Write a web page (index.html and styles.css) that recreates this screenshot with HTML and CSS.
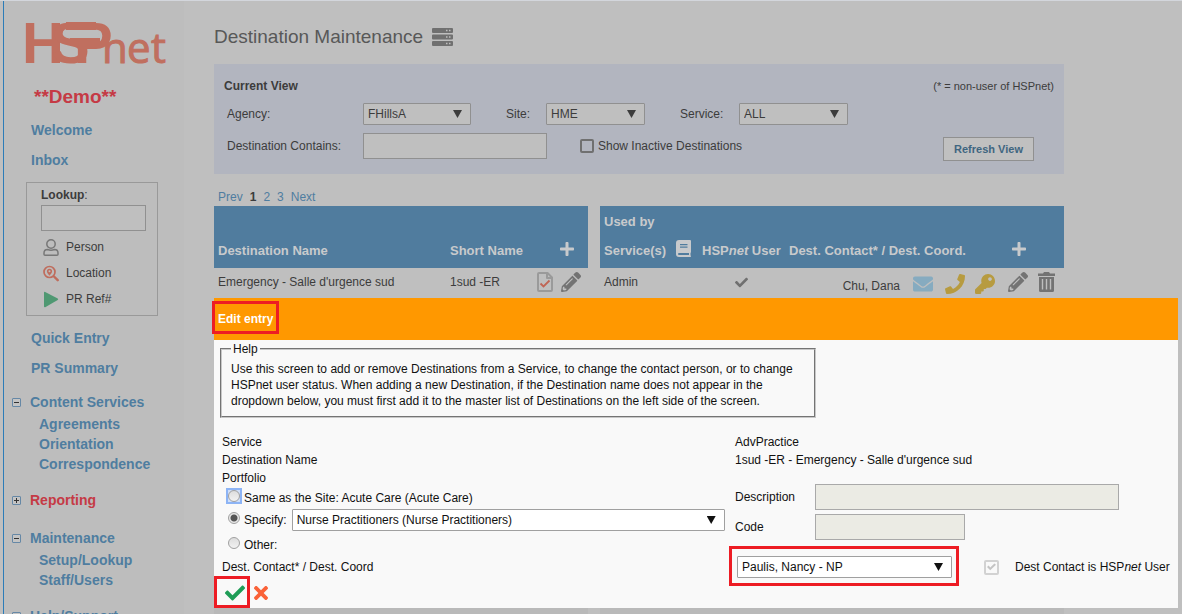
FILE: index.html
```html
<!DOCTYPE html>
<html lang="en">
<head>
<meta charset="utf-8">
<title>HSPnet - Destination Maintenance</title>
<link rel="stylesheet" href="styles.css">
</head>
<body>
<svg class="sprite" aria-hidden="true">
  <symbol id="i-check" viewBox="0 0 512 512"><path d="M173.898 439.404l-166.4-166.4c-9.997-9.997-9.997-26.206 0-36.204l36.203-36.204c9.997-9.998 26.207-9.998 36.204 0L192 312.69 432.095 72.596c9.997-9.997 26.207-9.997 36.204 0l36.203 36.204c9.997 9.997 9.997 26.206 0 36.204l-294.4 294.401c-9.998 9.997-26.207 9.997-36.204-.001z"/></symbol>
  <symbol id="i-times" viewBox="0 80 352 352"><path d="M242.72 256l100.07-100.07c12.28-12.28 12.28-32.19 0-44.48l-22.24-22.24c-12.28-12.28-32.19-12.28-44.48 0L176 189.28 75.93 89.21c-12.28-12.28-32.19-12.28-44.48 0L9.21 111.45c-12.28 12.28-12.28 32.19 0 44.48L109.28 256 9.21 356.07c-12.28 12.28-12.28 32.19 0 44.48l22.24 22.24c12.28 12.28 32.2 12.28 44.48 0L176 322.72l100.07 100.07c12.28 12.28 32.2 12.28 44.48 0l22.24-22.24c12.28-12.28 12.28-32.19 0-44.48L242.72 256z"/></symbol>
  <symbol id="i-plus" viewBox="0 32 448 448"><path d="M416 208H272V64c0-17.67-14.33-32-32-32h-32c-17.67 0-32 14.33-32 32v144H32c-17.67 0-32 14.33-32 32v32c0 17.67 14.33 32 32 32h144v144c0 17.67 14.33 32 32 32h32c17.67 0 32-14.33 32-32V304h144c17.67 0 32-14.33 32-32v-32c0-17.67-14.33-32-32-32z"/></symbol>
  <symbol id="i-envelope" viewBox="0 0 512 512"><path d="M502.3 190.8c3.9-3.1 9.7-.2 9.7 4.7V400c0 26.5-21.5 48-48 48H48c-26.5 0-48-21.5-48-48V195.6c0-5 5.7-7.8 9.7-4.7 22.4 17.4 52.1 39.5 154.1 113.6 21.1 15.4 56.7 47.8 92.2 47.6 35.7.3 72-32.8 92.3-47.6 102-74.1 131.6-96.3 154-113.7zM256 320c23.2.4 56.6-29.2 73.4-41.4 132.7-96.3 142.8-104.7 173.4-128.7 5.8-4.5 9.2-11.5 9.2-18.9v-19c0-26.5-21.5-48-48-48H48c-26.5 0-48 21.5-48 48v19c0 7.4 3.4 14.3 9.2 18.9 30.6 23.9 40.7 32.4 173.4 128.7 16.8 12.2 50.2 41.8 73.4 41.4z"/></symbol>
  <symbol id="i-phone" viewBox="0 0 512 512"><path d="M493.4 24.6l-104-24c-11.3-2.6-22.9 3.3-27.5 13.9l-48 112c-4.2 9.8-1.4 21.3 6.9 28l60.6 49.6c-36 76.7-98.9 140.5-177.2 177.2l-49.6-60.6c-6.8-8.3-18.2-11.1-28-6.9l-112 48C3.9 366.5-2 378.1.6 389.4l24 104C27.1 504.2 36.7 512 48 512c256.1 0 464-207.5 464-464 0-11.2-7.7-20.9-18.6-23.4z"/></symbol>
  <symbol id="i-key" viewBox="0 0 512 512"><path d="M512 176.001C512 273.203 433.202 352 336 352c-11.22 0-22.19-1.062-32.827-3.069l-24.012 27.014A23.999 23.999 0 0 1 261.223 384H224v40c0 13.255-10.745 24-24 24h-40v40c0 13.255-10.745 24-24 24H24c-13.255 0-24-10.745-24-24v-78.059c0-6.365 2.529-12.47 7.029-16.971l161.802-161.802C163.108 213.814 160 195.271 160 176 160 78.798 238.797.001 335.999 0 433.488-.001 512 78.511 512 176.001zM336 128c0 26.51 21.49 48 48 48s48-21.49 48-48-21.49-48-48-48-48 21.49-48 48z"/></symbol>
  <symbol id="i-pencil" viewBox="0 0 512 512"><path d="M497.9 142.1l-46.1 46.1c-4.7 4.7-12.3 4.7-17 0l-111-111c-4.7-4.7-4.7-12.3 0-17l46.1-46.1c18.7-18.7 49.1-18.7 67.9 0l60.1 60.1c18.8 18.7 18.8 49.1 0 67.9zM284.2 99.8L21.6 362.4.4 483.9c-2.9 16.4 11.4 30.6 27.8 27.8l121.5-21.3 262.6-262.6c4.7-4.7 4.7-12.3 0-17l-111-111c-4.8-4.7-12.4-4.7-17.1 0zM124.1 339.9c-5.5-5.5-5.5-14.3 0-19.8l154-154c5.5-5.5 14.3-5.5 19.8 0s5.5 14.3 0 19.8l-154 154c-5.5 5.5-14.3 5.5-19.8 0zM88 424h48v36.3l-64.5 11.3-31.1-31.1L51.7 376H88v48z"/></symbol>
  <symbol id="i-trash" viewBox="0 0 17 20"><path fill-rule="evenodd" d="M0 1.500h5L6 0h5l1 1.500h5V4H0zM1 5h15v13.500q0 1.500-1.500 1.500h-12Q1 20 1 18.500zM3.800 7v10.500h1.400V7zM7.800 7v10.500h1.400V7zM11.800 7v10.500h1.400V7z"/></symbol>
  <symbol id="i-book" viewBox="0 0 15 17"><path fill-rule="evenodd" d="M3 0h11q1 0 1 1v11q0 .7-.5 1v2.500q.5.2.5.700t-.7.800H3q-3 0-3-3V3Q0 0 3 0zM4 4v1.200h7.500V4zM4 6.500v1.200h7.500V6.500zM3 13q-1 0-1 1t1 1h10v-2z"/></symbol>
  <symbol id="i-server" viewBox="0 0 21 18"><path fill-rule="evenodd" d="M1 0h19q1 0 1 1v3q0 1-1 1H1Q0 5 0 4V1q0-1 1-1zM14 1.800v1.400h1.500V1.800zM17 1.800v1.400h1.500V1.800zM1 6.500h19q1 0 1 1v3q0 1-1 1H1q-1 0-1-1v-3q0-1 1-1zM14 8.300v1.400h1.500V8.300zM17 8.300v1.400h1.500V8.300zM1 13h19q1 0 1 1v3q0 1-1 1H1q-1 0-1-1v-3q0-1 1-1zM14 14.800v1.400h1.500v-1.400zM17 14.800v1.400h1.500v-1.400z"/></symbol>
  <symbol id="i-filecheck" viewBox="0 0 16 20"><path fill="none" stroke="#9a9a9a" stroke-width="2" stroke-linejoin="round" d="M2 1h8.500L15 5.500V18q0 1-1 1H2q-1 0-1-1V2q0-1 1-1zM10 1v5h5"/><path fill="none" stroke="#c06555" stroke-width="1.800" d="M3.500 11.500l3 3 6-6"/></symbol>
  <symbol id="i-person" viewBox="0 0 16 17"><g fill="none" stroke="#777" stroke-width="1.500"><circle cx="8" cy="5" r="4.200"/><path d="M4.500 10.500q3.500 1.500 7 0 3.500 0 3.500 3.500v1.200q0 1-1 1H2q-1 0-1-1V14q0-3.500 3.500-3.500z"/></g></symbol>
  <symbol id="i-location" viewBox="0 0 16 16"><g fill="none" stroke="#bf6d5d"><circle cx="6.500" cy="6.500" r="5.500" stroke-width="1.700"/><path stroke-width="2.400" stroke-linecap="round" d="M11 11l3.700 3.700"/></g><path fill="#bf6d5d" fill-rule="evenodd" d="M6.500 3.200a2.600 2.600 0 0 1 2.600 2.600C9.100 7.500 6.500 10.200 6.500 10.200S3.900 7.500 3.900 5.800a2.600 2.600 0 0 1 2.600-2.600zm0 1.600a1 1 0 1 0 0 2 1 1 0 0 0 0-2z"/></symbol>
  <symbol id="i-play" viewBox="0 0 16 16"><path d="M1 1q0-1 1.200-.5l12.500 6.500q1 .8 0 1.600L2.200 15.800Q1 16 1 15z"/></symbol>
</svg>

<div class="app">
  <aside class="sidebar">
    <svg class="logo" viewBox="0 0 140 44" role="img" aria-label="HSPnet">
      <text class="logo-bold" x="-4 25 48" y="41">HSP</text>
      <path class="logo-fill" d="M40 0h30v8H40zM44 16h30v8H44z"/>
      <rect class="logo-gap" x="39" y="8" width="34" height="8" rx="4"/>
      <text class="logo-light" x="76 101 125" y="41">net</text>
    </svg>
    <p class="demo">**Demo**</p>
    <nav>
      <ul class="links">
        <li><a href="#">Welcome</a></li>
        <li><a href="#">Inbox</a></li>
      </ul>
      <form class="lookup">
        <label for="lookup"><b>Lookup</b>:</label>
        <input id="lookup" class="text" type="text">
        <button type="button"><svg><use href="#i-person"/></svg>Person</button>
        <button type="button"><svg><use href="#i-location"/></svg>Location</button>
        <button type="button"><svg class="green"><use href="#i-play"/></svg>PR Ref#</button>
      </form>
      <ul class="links">
        <li><a href="#">Quick Entry</a></li>
        <li><a href="#">PR Summary</a></li>
      </ul>
      <ul class="groups">
        <li><button type="button" class="toggle open" aria-label="Collapse"></button><a href="#">Content Services</a>
          <ul><li><a href="#">Agreements</a></li><li><a href="#">Orientation</a></li><li><a href="#">Correspondence</a></li></ul></li>
        <li><button type="button" class="toggle" aria-label="Expand"></button><a href="#" class="current">Reporting</a></li>
        <li><button type="button" class="toggle open" aria-label="Collapse"></button><a href="#">Maintenance</a>
          <ul><li><a href="#">Setup/Lookup</a></li><li><a href="#">Staff/Users</a></li></ul></li>
        <li><button type="button" class="toggle open" aria-label="Collapse"></button><a href="#">Help/Support</a></li>
      </ul>
    </nav>
  </aside>

  <main class="main">
    <h1>Destination Maintenance <svg><use href="#i-server"/></svg></h1>
    <form class="filter">
      <div class="filter-head"><h2>Current View</h2><small>(* = non-user of HSPnet)</small></div>
      <div class="filter-row selects">
        <div class="field"><label class="wide" for="agency">Agency:</label><span class="select w-agency"><select id="agency"><option>FHillsA</option></select></span></div>
        <div class="field"><label class="short" for="site">Site:</label><span class="select w-site"><select id="site"><option>HME</option></select></span></div>
        <div class="field"><label class="mid" for="service">Service:</label><span class="select w-service"><select id="service"><option>ALL</option></select></span></div>
      </div>
      <div class="filter-row">
        <div class="field"><label class="wide" for="contains">Destination Contains:</label><input id="contains" class="text w-contains" type="text"></div>
        <label class="inactive"><input type="checkbox">Show Inactive Destinations</label>
        <button type="button" class="refresh">Refresh View</button>
      </div>
    </form>
    <div class="pager"><a href="#">Prev</a><b>1</b><a href="#">2</a><a href="#">3</a><a href="#">Next</a></div>
    <div class="tables">
      <table>
        <colgroup><col><col class="c-short"><col class="c-tools"></colgroup>
        <thead><tr><th>Destination Name</th><th>Short Name</th><th class="add add-left"><svg class="plus"><use href="#i-plus"/></svg></th></tr></thead>
        <tbody>
          <tr><td>Emergency - Salle d'urgence sud</td><td>1sud -ER</td><td><div class="tools"><svg class="file"><use href="#i-filecheck"/></svg><svg><use href="#i-pencil"/></svg></div></td></tr>
          <tr class="rest"><td colspan="3"></td></tr>
        </tbody>
      </table>
      <table>
        <colgroup><col class="c-services"><col class="c-user"><col><col class="c-edit"></colgroup>
        <thead><tr><th>Used by<br><span class="with-icon">Service(s)<svg class="book"><use href="#i-book"/></svg></span></th><th>HSP<i>net</i> User</th><th>Dest. Contact* / Dest. Coord.</th><th class="add"><svg class="plus"><use href="#i-plus"/></svg></th></tr></thead>
        <tbody>
          <tr><td>Admin</td><td class="tick"><svg><use href="#i-check"/></svg></td><td><div class="contact"><span>Chu, Dana</span><svg class="mail"><use href="#i-envelope"/></svg><svg class="gold"><use href="#i-phone"/></svg><svg class="gold"><use href="#i-key"/></svg></div></td><td><div class="tools"><svg><use href="#i-pencil"/></svg><svg class="trash"><use href="#i-trash"/></svg></div></td></tr>
          <tr class="rest"><td colspan="4"></td></tr>
        </tbody>
      </table>
    </div>
  </main>

  <section class="dialog" role="dialog" aria-labelledby="dialog-title">
    <header><h2 id="dialog-title"><span class="marked mark-title">Edit entry</span></h2></header>
    <form class="entry">
      <fieldset class="help">
        <legend>Help</legend>
        Use this screen to add or remove Destinations from a Service, to change the contact person, or to change HSPnet user status. When adding a new Destination, if the Destination name does not appear in the dropdown below, you must first add it to the master list of Destinations on the left side of the screen.
      </fieldset>
      <div class="grid">
        <div>Service</div><div>AdvPractice</div>
        <div>Destination Name</div><div>1sud -ER - Emergency - Salle d'urgence sud</div>
        <div class="portfolio">
          <div>Portfolio</div>
          <div class="choice"><span class="focus-ring"><input type="radio" name="portfolio" id="p1"></span><label for="p1">Same as the Site: Acute Care (Acute Care)</label></div>
          <div class="choice"><input type="radio" name="portfolio" id="p2" checked><label for="p2">Specify:</label><span class="select w-specify"><select aria-label="Portfolio"><option>Nurse Practitioners (Nurse Practitioners)</option></select></span></div>
          <div class="choice other"><input type="radio" name="portfolio" id="p3"><label for="p3">Other:</label></div>
        </div>
        <div class="details">
          <label for="desc">Description</label><input id="desc" class="text" type="text" disabled>
          <label for="code">Code</label><input id="code" class="text code" type="text" disabled>
        </div>
        <label class="contact-label" for="coord">Dest. Contact* / Dest. Coord</label>
        <div class="contact-row">
          <span class="marked mark-contact"><span class="select w-coord"><select id="coord"><option>Paulis, Nancy - NP</option></select></span></span>
          <label class="is-user"><input type="checkbox" checked disabled><span>Dest Contact is HSP<i>net</i> User</span></label>
        </div>
      </div>
      <div class="actions">
        <button type="button" class="save marked mark-save" aria-label="Save"><svg><use href="#i-check"/></svg></button>
        <button type="button" class="cancel" aria-label="Cancel"><svg><use href="#i-times"/></svg></button>
      </div>
    </form>
  </section>
</div>
</body>
</html>
```

FILE: styles.css
```css
* { box-sizing: border-box; }

body {
  margin: 0;
  background: #bfbfbf;
  color: #3c3c3c;
  font: 12px/20px "Liberation Sans", Arial, sans-serif;
}

h1, h2, p, ul { margin: 0; padding: 0; }
ul { list-style: none; }
a { color: #4f7da0; text-decoration: none; }
button, input, select { font: inherit; color: inherit; margin: 0; }
button { padding: 0; border: 0; background: none; }
svg { display: block; fill: currentColor; }
.sprite { position: absolute; width: 0; height: 0; }

.app {
  position: relative;
  display: flex;
  height: 100vh;
  overflow: hidden;
  border-top: 1px solid #d3d6dc;
}

/* Sidebar */
.sidebar {
  flex: none;
  width: 181px;
  margin-left: 3px;
  padding: 21px 0 0 22px;
  border-left: 1px solid #2c7cb8;
  background: #bdbdbd;
}
.logo { width: 140px; height: 44px; overflow: visible; color: #c06f5f; }
.logo-bold { font: bold 58px "Liberation Sans", Arial, sans-serif; }
.logo-light {
  font: 42px "Open Sans", "Noto Sans", sans-serif;
  stroke: currentColor;
  stroke-width: 1px;
}
.logo-gap { fill: #bdbdbd; }
.demo {
  padding: 19px 0 11px 8px;
  color: #c53a45;
  font-size: 19px;
  font-weight: bold;
  line-height: 24px;
}
.links {
  display: grid;
  gap: 10px;
  padding-left: 5px;
  font-size: 14px;
  font-weight: bold;
}
.lookup {
  display: grid;
  justify-items: start;
  width: 132px;
  margin: 12px 0;
  padding: 2px 11px 3px 14px;
  border: 1px solid #999;
}
.lookup .text { width: 100%; }
.lookup button {
  display: flex;
  align-items: center;
  gap: 7px;
  height: 26px;
}
.lookup button svg { width: 16px; height: 17px; margin-left: 2px; }
.lookup .green { color: #4f9872; }
.lookup .text + button { margin-top: 3px; }
.groups {
  display: grid;
  gap: 16px;
  margin: 14px 0 0 -14px;
  font-size: 14px;
  font-weight: bold;
}
.groups ul { padding: 2px 0 0 27px; }
.groups > li > a { margin-left: 9px; }
.groups > li:nth-child(2) { padding-bottom: 2px; }
.groups .current { color: #c53a45; }
.toggle {
  width: 9px;
  height: 9px;
  margin-bottom: 2px;
  vertical-align: middle;
  border: 1px solid #6688a6;
  border-radius: 1px;
  background:
    linear-gradient(#333, #333) center / 5px 1px no-repeat,
    linear-gradient(#333, #333) center / 1px 5px no-repeat,
    #c4c4c4;
}
.toggle.open { background: linear-gradient(#333, #333) center / 5px 1px no-repeat, #c4c4c4; }

/* Form controls */
.text {
  height: 26px;
  padding: 0 4px;
  border: 1px solid #909090;
  background: #bfbfbf;
}
.select { position: relative; display: block; }
.select select {
  display: block;
  width: 100%;
  height: 22px;
  padding: 0 4px;
  appearance: none;
  border: 1px solid #909090;
  border-radius: 1px;
  background: #bfbfbf;
}
.select::after {
  content: "";
  position: absolute;
  top: 7px;
  right: 9px;
  width: 9px;
  height: 8px;
  background: currentColor;
  clip-path: polygon(0 0, 100% 0, 50% 100%);
  pointer-events: none;
}

/* Main page */
.main {
  flex: 1;
  padding: 24px 118px 0 30px;
}
h1 {
  display: flex;
  align-items: center;
  gap: 9px;
  color: #585858;
  font-size: 19px;
  font-weight: normal;
  line-height: 24px;
}
h1 svg { width: 21px; height: 18px; color: #707070; }
.filter {
  margin-top: 15px;
  padding: 12px 10px 15px;
  background: #b2b5bf;
}
.filter-head { display: flex; justify-content: space-between; }
.filter-head small { font-size: 11px; }
h2 { font-size: 12px; }
.filter-row { display: flex; align-items: center; padding: 0 20px 0 3px; }
.selects { gap: 35px; margin: 7px 0 8px; }
.field { display: flex; align-items: center; }
.wide { width: 136px; }
.short { width: 40px; }
.mid { width: 59px; }
.w-agency { width: 108px; }
.w-site { width: 99px; }
.w-service { width: 109px; }
.w-contains { width: 184px; }
.inactive { display: flex; align-items: center; gap: 4px; margin-left: 33px; }
.inactive input {
  width: 14px;
  height: 14px;
  appearance: none;
  border: 2px solid #707070;
  border-radius: 2px;
}
.refresh {
  align-self: flex-end;
  width: 91px;
  height: 24px;
  margin: 0 0 -2px auto;
  border: 1px solid #909090;
  background: #c0c0c0;
  color: #3f6680;
  font-size: 11px;
  font-weight: bold;
}
.pager { display: flex; gap: 7px; margin-top: 14px; padding-left: 4px; line-height: 18px; }

.tables { display: grid; grid-template-columns: 374fr 464fr; gap: 12px; }
table { width: 100%; table-layout: fixed; border-collapse: collapse; }
th {
  height: 62px;
  padding: 1px 0 3px 4px;
  background: #507c9e;
  color: #c8cacc;
  font-size: 13px;
  line-height: 29px;
  text-align: left;
  vertical-align: bottom;
  white-space: nowrap;
}
td { height: 30px; padding: 0 0 2px 4px; white-space: nowrap; }
.rest td { height: 340px; background: #b9b9b9; }
.c-short { width: 87px; }
.c-tools { width: 55px; }
.c-services { width: 98px; }
.c-user { width: 87px; }
.c-edit { width: 60px; }
.with-icon { display: flex; align-items: center; gap: 10px; }
.book { width: 15px; height: 17px; margin-bottom: 4px; }
.plus { width: 14px; height: 14px; margin-bottom: 9px; }
.add { padding-left: 8px; }
.add-left { padding-left: 27px; }
.tools { display: flex; align-items: center; gap: 8px; color: #737373; }
.tools svg { width: 20px; height: 20px; }
.tools .file { width: 16px; }
.tools .trash { width: 17px; margin-left: 2px; }
.tick svg { width: 13px; height: 13px; margin-left: 33px; color: #707070; }
.contact { display: flex; align-items: center; justify-content: flex-end; gap: 10px; padding: 4px 9px 0 0; }
.contact span { padding: 4px 3px 0 0; }
.contact svg { width: 20px; height: 20px; }
.contact .mail { margin-right: 2px; color: #86abc0; }
.gold { color: #b79b40; }

/* Edit dialog */
.dialog {
  position: absolute;
  top: 297px;
  right: 4px;
  left: 214px;
  background: #f9f9f9;
  color: #111;
}
.dialog header {
  padding: 11px 4px;
  background: #ff9800;
  color: #fff;
}
.entry { padding: 0 8px 5px 6px; }
.entry .text { border-color: #a9a9a9; }
.entry .select select { border-color: #a0a0a0; background: #fff; }
.help {
  max-width: 596px;
  margin: 0;
  padding: 3px 9px 7px;
  border: 2px groove #c8c8c8;
  line-height: 16px;
}
.help legend { padding: 0 2px; line-height: 18px; }
.grid {
  display: grid;
  grid-template-columns: 513px 1fr;
  margin-top: 15px;
  padding-left: 2px;
  line-height: 18px;
}
.choice { display: flex; align-items: center; gap: 4px; height: 22px; padding-left: 6px; }
.choice.other { margin-top: 3px; }
.choice input {
  display: block;
  width: 12px;
  height: 12px;
  margin-bottom: 4px;
  appearance: none;
  border: 1px solid #a0a0a0;
  border-radius: 50%;
  background: linear-gradient(#ddd, #f2f2f2);
}
.choice input:checked { background: radial-gradient(circle, #555 0 3px, #e8e8e8 4px); }
.focus-ring { margin-bottom: 4px; outline: 2px solid #8db4f5; background: #cfdffa; }
.choice .focus-ring input { margin: 0; }
.w-specify { width: 433px; margin-left: 1px; }
.details {
  display: grid;
  grid-template-columns: 80px 1fr;
  align-items: center;
  align-content: start;
  gap: 4px 0;
  padding-top: 15px;
}
.details .text { width: 304px; background: #ebebe4; }
.details .code { width: 150px; }
.contact-label { padding-top: 2px; }
.contact-row { display: flex; align-items: center; padding-left: 2px; }
.w-coord { width: 215px; }
.is-user { display: flex; align-items: center; gap: 16px; margin-left: 32px; white-space: nowrap; }
.is-user input {
  display: grid;
  place-items: center;
  width: 15px;
  height: 15px;
  appearance: none;
  border: 2px solid #d2d2d2;
  border-radius: 2px;
}
.is-user input::after {
  content: "";
  width: 9px;
  height: 8px;
  background: #c4c4c4;
  clip-path: polygon(0 50%, 18% 32%, 36% 55%, 82% 5%, 100% 22%, 36% 92%);
}
.actions { display: flex; align-items: center; gap: 9px; padding: 5px 0 0 5px; }
.save { color: #1f9d57; }
.save svg { width: 20px; height: 20px; }
.cancel { color: #fa6238; }
.cancel svg { width: 14px; height: 14px; }

/* Red call-out frames round the parts being explained */
.marked { position: relative; }
.marked::before {
  content: "";
  position: absolute;
  border: 3px solid #ed1c24;
  pointer-events: none;
}
.mark-title::before { inset: -11px -6px -8px; }
.mark-contact::before { inset: -10px -7px -8px -8px; }
.mark-save::before { inset: -7px -5px -5px -11px; }
```
